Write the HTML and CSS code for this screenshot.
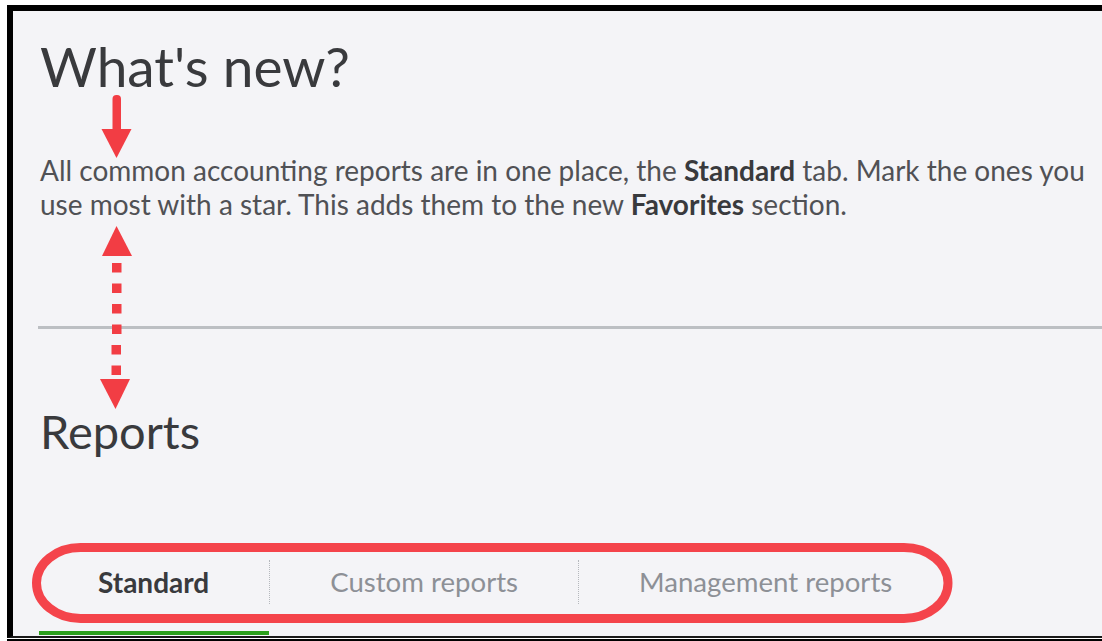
FILE: index.html
```html
<!DOCTYPE html>
<html lang="en">
<head>
<meta charset="utf-8">
<title>Reports</title>
<link rel="stylesheet" href="styles.css">
</head>
<body>
<div class="frame">
  <section class="whats-new">
    <h1 class="title">What's new?</h1>
    <p class="intro">All common accounting reports are in one place, the <b>Standard</b> tab. Mark the ones you use most with a star. This adds them to the new <b>Favorites</b> section.</p>
  </section>
  <hr class="divider">
  <section class="reports">
    <h2 class="reports-title">Reports</h2>
    <nav class="tabs">
      <span class="tab active">Standard</span>
      <span class="tab">Custom reports</span>
      <span class="tab">Management reports</span>
    </nav>
  </section>
</div>
<div class="base-line"></div>

<svg class="marks" width="1102" height="641" viewBox="0 0 1102 641" aria-hidden="true">
  <g fill="#f23d44">
    <!-- arrow pointing at the intro text -->
    <rect x="112.5" y="95" width="8.5" height="38" rx="4"/>
    <polygon points="101.5,129 131.5,129 116.5,158"/>
    <!-- dotted two-way arrow across the divider -->
    <polygon points="116.5,226 102,256 132,256"/>
    <rect x="112" y="263" width="9.5" height="9.5"/>
    <rect x="112" y="283.5" width="9.5" height="9.5"/>
    <rect x="112" y="304" width="9.5" height="9.5"/>
    <rect x="112" y="324.5" width="9.5" height="9.5"/>
    <rect x="111.5" y="345" width="9.5" height="9.5"/>
    <rect x="111.5" y="365.5" width="9.5" height="9.5"/>
    <polygon points="100,379 130,379 115.5,409"/>
  </g>
  <!-- outline around the tab bar -->
  <rect x="36.5" y="547.5" width="911.5" height="71" rx="44" ry="35.5" fill="none" stroke="#f4444b" stroke-width="9"/>
</svg>
</body>
</html>
```

FILE: styles.css
```css
html, body {
  margin: 0;
  padding: 0;
  background: #ffffff;
}

body {
  position: relative;
  width: 1102px;
  height: 641px;
  overflow: hidden;
  font-family: "Lato", "Open Sans", sans-serif;
  color: #393a3d;
}

.frame {
  margin: 5px 0 0 7px;
  height: 625px;
  border-left: 6px solid #000;
  border-top: 6px solid #000;
  border-bottom: 2px solid #1a1a1a;
  background: #f4f4f7;
  box-sizing: content-box;
  padding-left: 25px;
  display: flex;
  flex-direction: column;
}

.whats-new {
  padding-top: 23px;
}

.title {
  margin: 0 0 0 2px;
  font-weight: 400;
  font-size: 55px;
  line-height: 64px;
  color: #393a3d;
}

.intro {
  margin: 55px 0 0 2px;
  font-size: 28px;
  line-height: 34px;
  color: #505155;
}

.intro b {
  font-weight: 700;
  color: #393a3d;
}

.divider {
  margin: 105px 0 0 0;
  border: 0;
  height: 3px;
  background: #bcbfc3;
}

.reports-title {
  margin: 74px 0 0 2px;
  font-weight: 400;
  font-size: 47px;
  line-height: 56px;
  color: #393a3d;
}

.tabs {
  margin-top: 101px;
  display: flex;
  align-items: center;
  height: 44px;
}

.tab {
  padding: 0 60px;
  font-size: 27.6px;
  line-height: 44px;
  color: #8d9096;
  border-left: 1px dotted #b5b8bd;
  white-space: nowrap;
}

.tab:first-child {
  border-left: 0;
}

.tab.active {
  font-weight: 700;
  font-size: 28px;
  color: #393a3d;
  position: relative;
}

.tab.active::after {
  content: "";
  position: absolute;
  left: 1px;
  right: 0;
  top: 71px;
  height: 4px;
  background: #2ca01c;
}

.base-line {
  margin: 1px 0 0 7px;
  height: 2px;
  background: #000;
}

.marks {
  position: absolute;
  left: 0;
  top: 0;
  pointer-events: none;
}
```
